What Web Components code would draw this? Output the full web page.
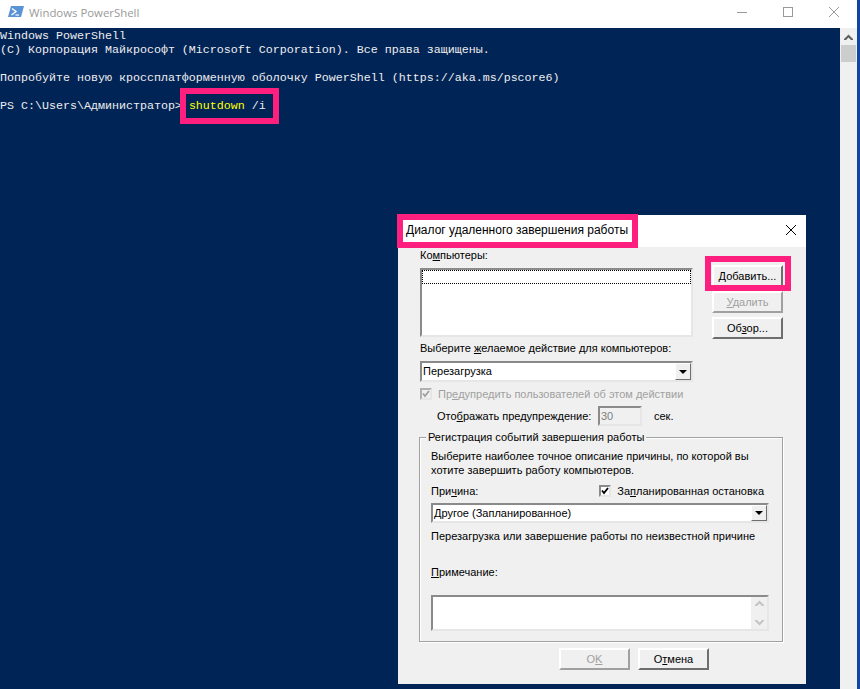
<!DOCTYPE html>
<html lang="ru">
<head>
<meta charset="utf-8">
<title>Windows PowerShell</title>
<style>
html, body { margin: 0; padding: 0; height: 100%; overflow: hidden; background: #012456; }
</style>
</head>
<body>
<ps-window>
  <ps-console>
    <div>Windows PowerShell</div>
    <div>(C) Корпорация Майкрософт (Microsoft Corporation). Все права защищены.</div>
    <div>&nbsp;</div>
    <div>Попробуйте новую кроссплатформенную оболочку PowerShell (https://aka.ms/pscore6)</div>
    <div>&nbsp;</div>
    <div>PS C:\Users\Администратор&gt; <span style="color:#ffff00">shutdown</span> <span style="color:#eeeeee">/i</span></div>
  </ps-console>
  <mark-box style="left:180px;top:88px;width:99px;height:36px"></mark-box>
  <shutdown-dialog></shutdown-dialog>
</ps-window>

<template id="window-tpl">
<style>
:host { display: block; position: relative; width: 860px; height: 689px; overflow: hidden; background: #012456; }
.title { box-sizing: border-box; height: 28px; padding-bottom: 4px; background: #fff; display: flex; align-items: center; width: 857px; }
.title svg.icon { margin-left: 8px; }
.title span { margin-left: 5px; font: 11.4px "Open Sans", "Liberation Sans", sans-serif; color: #999; flex: 1; }
.ctl { width: 46px; display: flex; align-items: center; justify-content: center; }
.main { display: flex; height: 661px; width: 857px; }
.con { flex: 1; min-width: 0; }
.bar { width: 17px; background: #f0f0f0; }
.bar .up { height: 17px; display: flex; align-items: center; justify-content: center; }
.bar .thumb { height: 17px; background: #cdcdcd; margin: 0 1px 0 1px; }
.edge { position: absolute; right: 0; top: 0; width: 3px; height: 689px; background: #0e45a6; }
</style>
<div class="title">
  <svg class="icon" width="16" height="12" viewBox="0 0 16 12"><path d="M3 0H16L13 11H0Z" fill="#5a93d6"/><path d="M4 2.5L8 5.5L3.5 9" fill="none" stroke="#fff" stroke-width="1.4"/><path d="M7.5 9H11" stroke="#fff" stroke-width="1.2"/></svg>
  <span>Windows PowerShell</span>
  <div class="ctl"><svg width="10" height="10"><path d="M0 5.5H10" stroke="#999"/></svg></div>
  <div class="ctl"><svg width="10" height="10"><rect x=".5" y=".5" width="9" height="9" fill="none" stroke="#999"/></svg></div>
  <div class="ctl"><svg width="10" height="10"><path d="M0 0L10 10M10 0L0 10" stroke="#999"/></svg></div>
</div>
<div class="main">
  <div class="con"><slot></slot></div>
  <div class="bar">
    <div class="up"><svg width="9" height="6"><path d="M0 5L4.5 .5L9 5V6H7L4.5 3.5L2 6H0Z" fill="#606060"/></svg></div>
    <div class="thumb"></div>
  </div>
</div>
<div class="edge"></div>
</template>

<template id="console-tpl">
<style>
:host { display: block; padding-top: 1px; font: 11.67px/14px "Liberation Mono", monospace; color: #eeeeee; white-space: nowrap; }
</style>
<slot></slot>
</template>

<template id="mark-tpl">
<style>
:host { display: block; position: absolute; box-sizing: border-box; border: 6px solid #ff1f7f; pointer-events: none; z-index: 5; }
</style>
</template>

<template id="button-tpl">
<style>
:host { display: block; box-sizing: border-box; width: 71px; height: 22px; border: 2px solid; border-color: #fff #6e6e6e #6e6e6e #fff; background: #f0f0f0; text-align: center; line-height: 18px; color: #000; }
:host([disabled]) { color: #a0a0a0; border-color: #fff #a0a0a0 #a0a0a0 #fff; }
</style>
<slot></slot>
</template>

<template id="combo-tpl">
<style>
:host { display: flex; box-sizing: border-box; height: 20px; border: 2px solid; border-color: #8a8a8a #e6e6e6 #e6e6e6 #8a8a8a; background: #fff; line-height: 16px; color: #000; }
.text { flex: 1; padding-left: 1px; }
.btn { width: 16px; box-sizing: border-box; background: #f0f0f0; border: 1px solid; border-color: #fff #6e6e6e #6e6e6e #fff; display: flex; align-items: center; justify-content: center; }
.btn i { border: 4px solid transparent; border-top: 4px solid #000; border-bottom: 0; }
</style>
<div class="text"><slot></slot></div>
<div class="btn"><i></i></div>
</template>

<template id="check-tpl">
<style>
:host { display: flex; align-items: center; height: 14px; line-height: 14px; color: #000; white-space: nowrap; }
:host([disabled]) { color: #a0a0a0; }
.box { width: 12px; height: 12px; box-sizing: border-box; border: 2px solid; border-color: #8a8a8a #e6e6e6 #e6e6e6 #8a8a8a; background: #fff; margin-right: 6px; display: flex; }
:host([disabled]) .box { background: #f0f0f0; border-color: #b0b0b0 #e6e6e6 #e6e6e6 #b0b0b0; }
svg { display: block; }
path { stroke: #000; }
:host([disabled]) path { stroke: #a0a0a0; }
</style>
<div class="box"><svg width="8" height="8"><path d="M1 3.5L3 6L7 1" fill="none" stroke-width="1.8"/></svg></div>
<slot></slot>
</template>

<template id="group-tpl">
<style>
:host { display: block; position: relative; box-sizing: border-box; border: 1px solid #a0a0a0; box-shadow: 1px 1px 0 #fff, inset 1px 1px 0 #fff; }
.legend { position: absolute; left: 6px; top: -8px; padding: 0 2px; background: #f0f0f0; line-height: 14px; white-space: nowrap; }
</style>
<div class="legend"><slot name="legend"></slot></div>
<slot></slot>
</template>

<template id="dialog-tpl">
<style>
:host { display: block; position: absolute; left: 398px; top: 215px; width: 408px; height: 469px; background: #f0f0f0; font: 11px/14px "Liberation Sans", Arial, sans-serif; color: #000; z-index: 2; }
u { text-decoration-thickness: 1px; }
.head { box-sizing: border-box; height: 32px; background: #fff; display: flex; align-items: center; justify-content: space-between; padding: 0 10px 3px 8px; font-size: 12px; }
.body { padding: 1px 0 0 22px; }
.top { display: flex; gap: 19px; }
.left { width: 273px; }
.list { box-sizing: border-box; height: 69px; margin-top: 6px; background: #fff; border: 2px solid; border-color: #8a8a8a #e6e6e6 #e6e6e6 #8a8a8a; }
.focus { height: 14px; box-sizing: border-box; border: 1px dotted #000; }
.right { display: flex; flex-direction: column; gap: 4px; padding-top: 17px; }
.gap4 { margin-top: 2px; }
win-combo.main { width: 273px; margin-top: 6px; height: 21px; }
win-check.warn { margin-top: 5px; }
.delay { display: flex; align-items: center; height: 20px; margin-top: 5px; padding-left: 17px; }
.delay .label { width: 161px; }
.delay .num { box-sizing: border-box; width: 44px; height: 20px; border: 2px solid; border-color: #8a8a8a #e6e6e6 #e6e6e6 #8a8a8a; color: #808080; line-height: 16px; padding-left: 1px; }
.delay .unit { margin-left: 12px; }
group-box { width: 364px; height: 205px; margin: 11px 0 0 -1px; padding: 11px 0 0 11px; }
.row { display: flex; justify-content: space-between; margin-top: 7px; padding-right: 18px; }
win-combo.reason { width: 338px; margin-top: 5px; height: 20px; }
.cause { margin-top: 6px; }
.note { margin-top: 22px; }
.memo { box-sizing: border-box; width: 338px; height: 36px; margin-top: 16px; background: #fff; border: 2px solid; border-color: #8a8a8a #e6e6e6 #e6e6e6 #8a8a8a; display: flex; justify-content: flex-end; }
.memo .sb { width: 16px; background: #f0f0f0; display: flex; flex-direction: column; justify-content: space-between; align-items: center; padding: 3px 0; }
.foot { display: flex; gap: 8px; margin: 6px 0 0 139px; }
</style>
<div class="head">
  <span>Диалог удаленного завершения работы</span>
  <svg width="10" height="10"><path d="M0 0L10 10M10 0L0 10" stroke="#000"/></svg>
</div>
<mark-box style="left:-1px;top:-1px;width:241px;height:34px"></mark-box>
<mark-box style="left:307px;top:41px;width:86px;height:35px"></mark-box>
<div class="body">
  <div class="top">
    <div class="left">
      <div>Ко<u>м</u>пьютеры:</div>
      <div class="list"><div class="focus"></div></div>
    </div>
    <div class="right">
      <win-button><u>Д</u>обавить...</win-button>
      <win-button disabled><u>У</u>далить</win-button>
      <win-button>Об<u>з</u>ор...</win-button>
    </div>
  </div>
  <div class="gap4">Выберите <u>ж</u>елаемое действие для компьютеров:</div>
  <win-combo class="main">Перезагрузка</win-combo>
  <win-check class="warn" disabled>Пр<u>е</u>дупредить пользователей об этом действии</win-check>
  <div class="delay"><span class="label">Ото<u>б</u>ражать предупреждение:</span><span class="num">30</span><span class="unit">сек.</span></div>
  <group-box>
    <span slot="legend">Регистрация событий завершения работы</span>
    <div>Выберите наиболее точное описание причины, по которой вы<br>хотите завершить работу компьютеров.</div>
    <div class="row"><span>При<u>ч</u>ина:</span><win-check>За<u>п</u>ланированная остановка</win-check></div>
    <win-combo class="reason">Другое (Запланированное)</win-combo>
    <div class="cause">Перезагрузка или завершение работы по неизвестной причине</div>
    <div class="note"><u>П</u>римечание:</div>
    <div class="memo"><div class="sb">
      <svg width="9" height="6"><path d="M0 5L4.5 .5L9 5V6H7L4.5 3.5L2 6H0Z" fill="#c4c4c4"/></svg>
      <svg width="9" height="6"><path d="M0 1L4.5 5.5L9 1V0H7L4.5 2.5L2 0H0Z" fill="#c4c4c4"/></svg>
    </div></div>
  </group-box>
  <div class="foot">
    <win-button disabled>O<u>K</u></win-button>
    <win-button>О<u>т</u>мена</win-button>
  </div>
</div>
</template>

<script>
"use strict"

/* every element is the same: open shadow root filled from its template */
function define(name, templateId) {
    customElements.define(name, class extends HTMLElement {
        constructor() {
            super();
            this.attachShadow({ mode: 'open' });
            this.shadowRoot.appendChild(document.getElementById(templateId).content.cloneNode(true));
        }
    });
}

define('mark-box', 'mark-tpl');
define('win-button', 'button-tpl');
define('win-combo', 'combo-tpl');
define('win-check', 'check-tpl');
define('group-box', 'group-tpl');
define('shutdown-dialog', 'dialog-tpl');
define('ps-console', 'console-tpl');
define('ps-window', 'window-tpl');
</script>
</body>
</html>
